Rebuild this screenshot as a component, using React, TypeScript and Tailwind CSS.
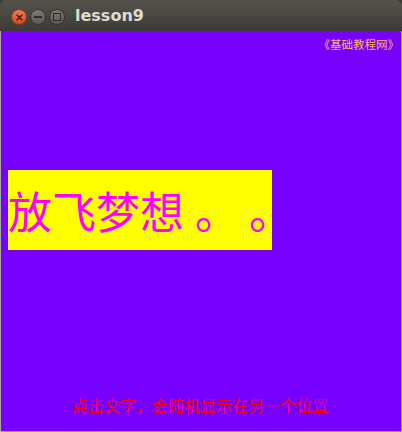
import React from "react";

export default function App() {
  return (
    <div className="w-[402px] h-[432px] flex flex-col bg-[#3c3b37] overflow-hidden" style={{ fontFamily: '"Noto Sans CJK SC", "Noto Sans", sans-serif' }}>
      {/* title bar */}
      <div className="h-[31px] shrink-0 flex items-center rounded-t-[6px] bg-gradient-to-b from-[#55534c] to-[#3c3b37]">
        <div className="flex items-center gap-[3px] ml-[11px] mt-[3px]">
          <div className="w-[16px] h-[16px] rounded-full bg-gradient-to-b from-[#f27a4f] to-[#d9481b] border border-[#8a3a1e] flex items-center justify-center">
            <svg width="7" height="7" viewBox="0 0 7 7">
              <path d="M1 1 L6 6 M6 1 L1 6" stroke="#3a1a10" strokeWidth="1.4" strokeLinecap="round" />
            </svg>
          </div>
          <div className="w-[16px] h-[16px] rounded-full bg-gradient-to-b from-[#7c7a73] to-[#5c5a54] border border-[#34332f] flex items-center justify-center">
            <div className="w-[8px] h-[2px] bg-[#2e2d2a]" />
          </div>
          <div className="w-[16px] h-[16px] rounded-full bg-gradient-to-b from-[#7c7a73] to-[#5c5a54] border border-[#34332f] flex items-center justify-center">
            <div className="w-[8px] h-[8px] border-[1.5px] border-[#2e2d2a]" />
          </div>
        </div>
        <div className="ml-[10px] mt-[1px] text-[16px] font-bold text-[#dfdbd2]" style={{ fontFamily: '"DejaVu Sans", sans-serif' }}>
          lesson9
        </div>
      </div>
      {/* content */}
      <div className="flex-1 flex flex-col bg-[#7700ff] border-x border-b border-[#a9a9a9]">
        <div className="flex justify-end pr-[2px] pt-[5px]">
          <span className="text-[11.5px] leading-[16px] text-[#ffb85a]">《基础教程网》</span>
        </div>
        <div className="mt-[118px] ml-[7px] w-[264px] h-[80px] bg-[#ffff00] flex items-center">
          <span className="text-[44px] leading-[44px] text-[#ff00ff] whitespace-nowrap [text-spacing-trim:space-all]">
            放飞梦想<span className="ml-[11px]">。</span><span className="ml-[10px] -mr-[21px]">。</span>
          </span>
        </div>
        <div className="mt-[143px] pl-[71px]">
          <span className="text-[16px] leading-[20px] text-[#ff0000] whitespace-nowrap [text-spacing-trim:space-all]">点击文字，会随机显示在另一个位置</span>
        </div>
      </div>
    </div>
  );
}
